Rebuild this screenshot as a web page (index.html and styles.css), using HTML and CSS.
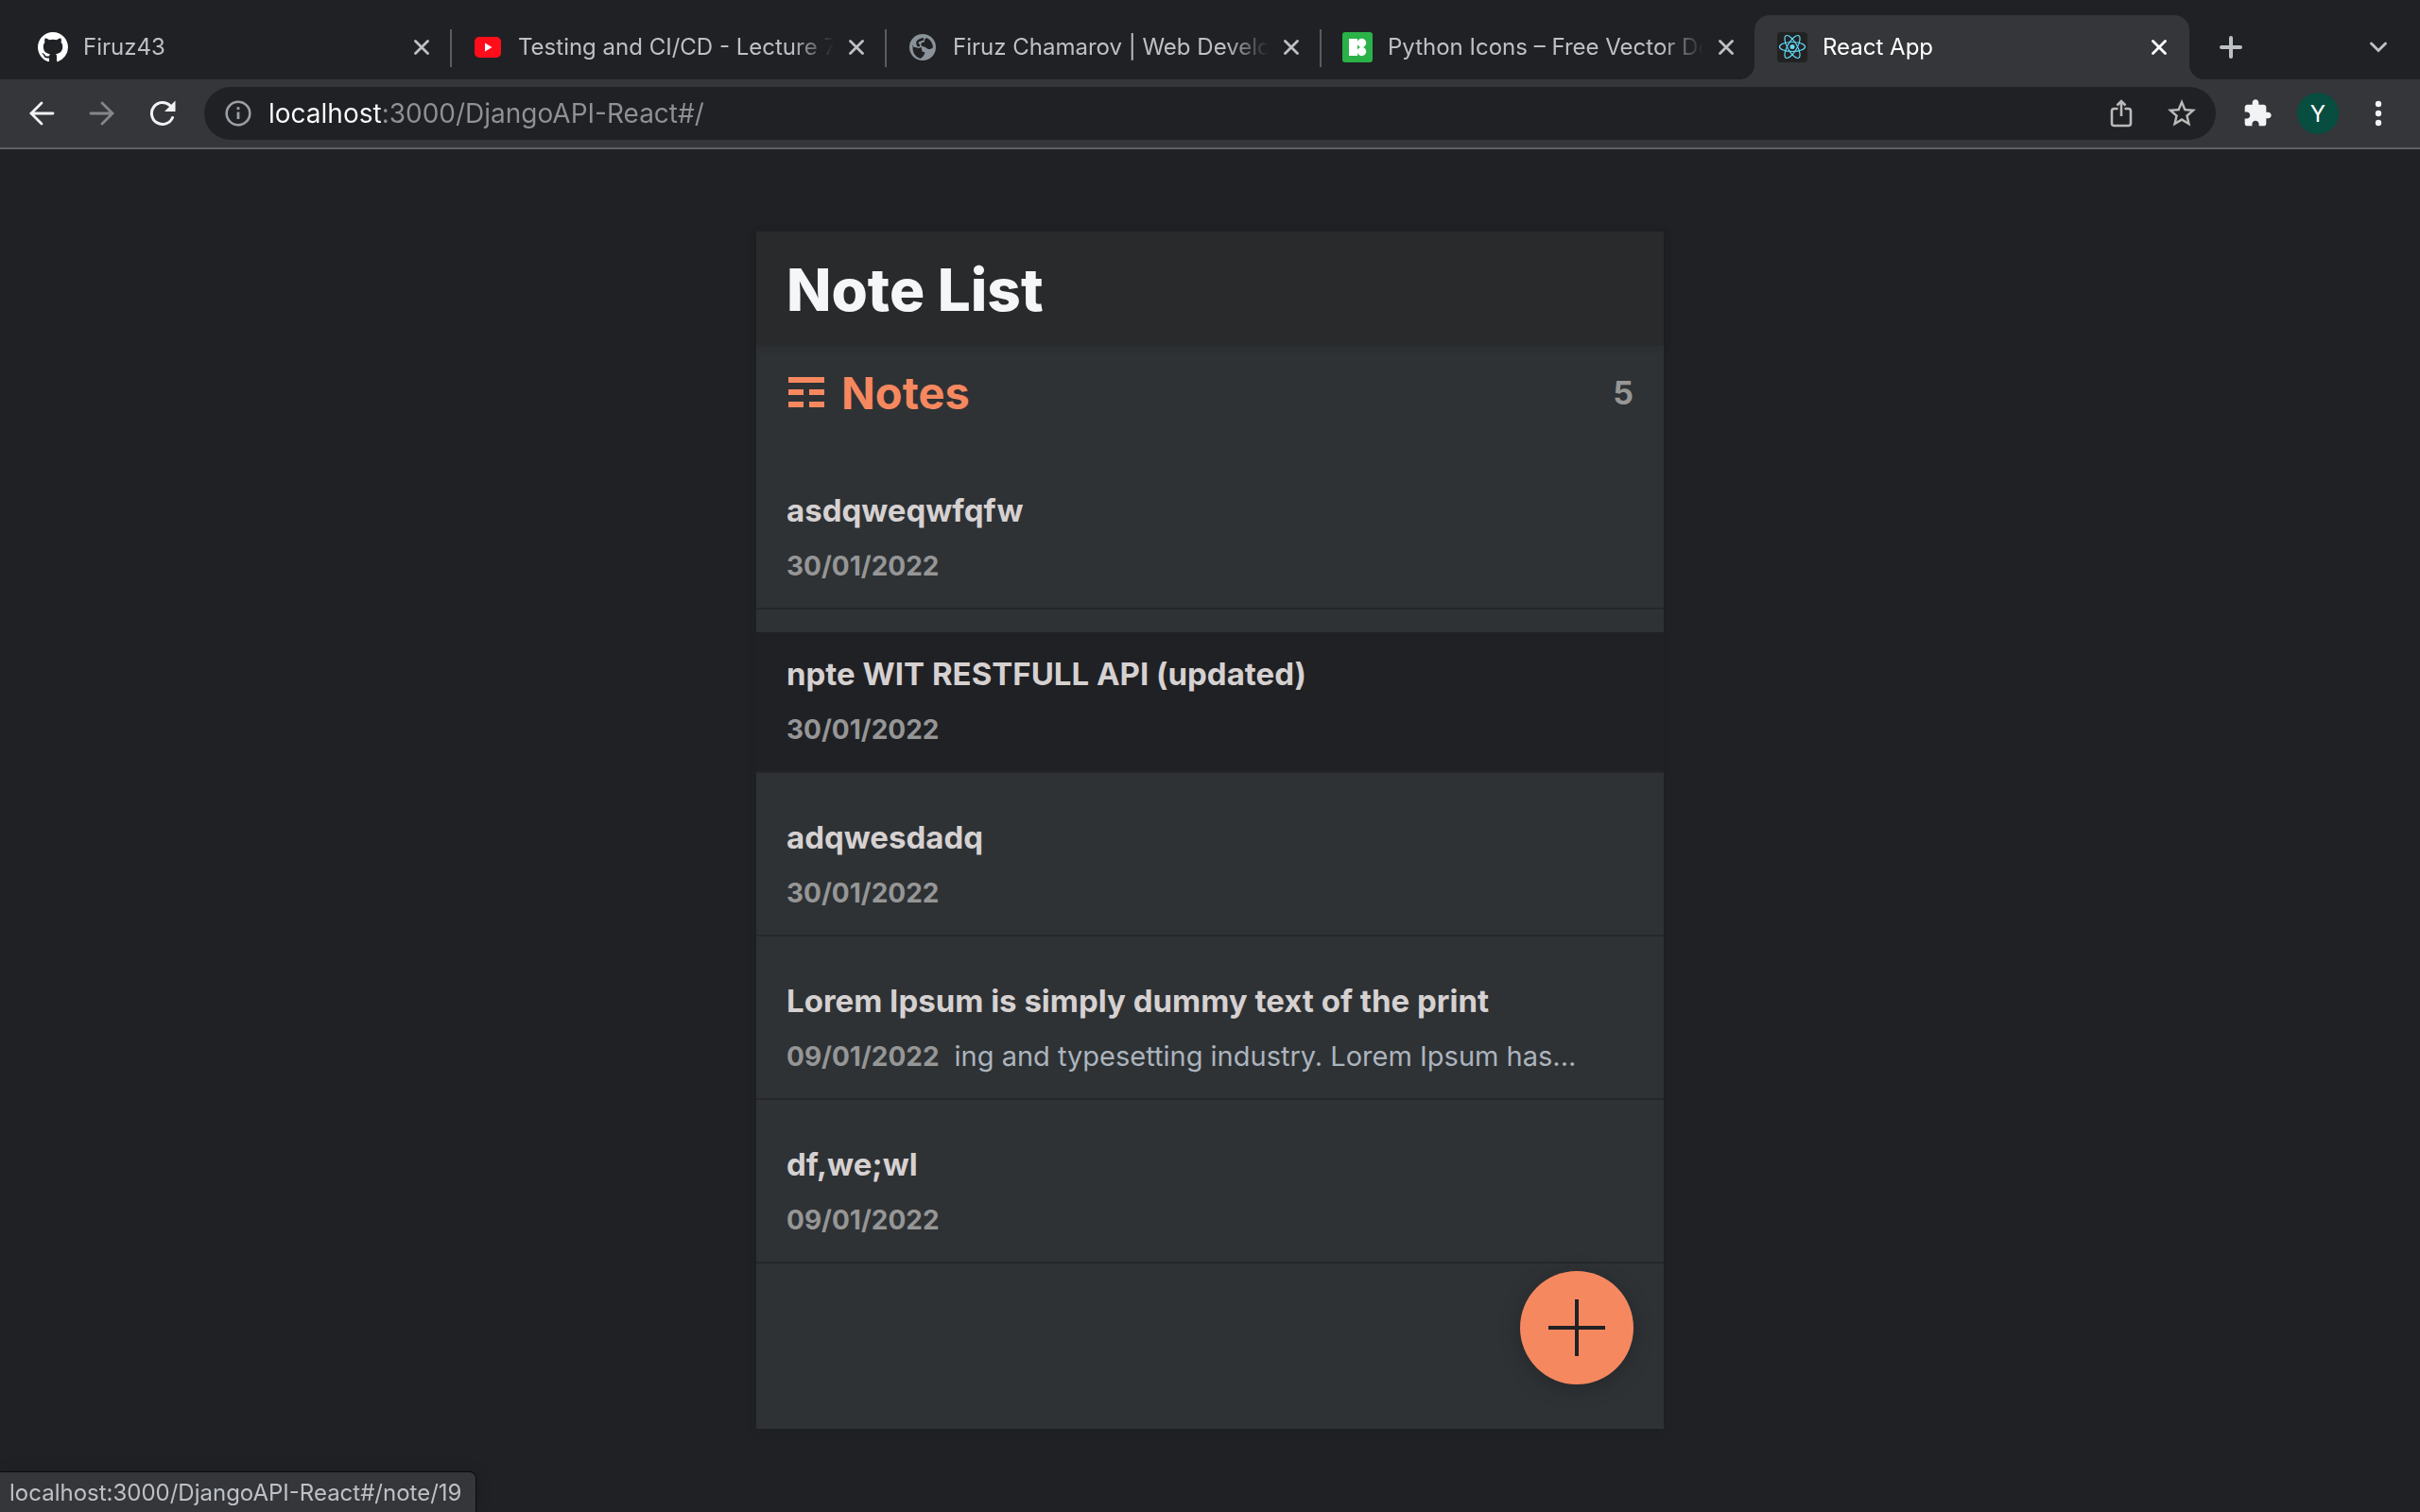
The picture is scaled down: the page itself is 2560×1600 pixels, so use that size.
FILE: index.html
```html
<!DOCTYPE html>
<html lang="en">
<head>
<meta charset="utf-8">
<title>React App</title>
<link rel="stylesheet" href="styles.css">
</head>
<body>
<svg class="sprite" aria-hidden="true">
  <symbol id="close" viewBox="0 0 16 16"><path d="M1.5 1.5l13 13M14.5 1.5l-13 13" fill="none" stroke="currentColor" stroke-width="2.8" stroke-linecap="round"/></symbol>
</svg>

<header class="browser">
  <div class="tabs">
    <div class="tab">
      <svg class="favicon" viewBox="0 0 16 16" aria-hidden="true"><path fill="#fff" d="M8 0C3.58 0 0 3.58 0 8c0 3.54 2.29 6.53 5.47 7.59.4.07.55-.17.55-.38 0-.19-.01-.82-.01-1.49-2.01.37-2.53-.49-2.69-.94-.09-.23-.48-.94-.82-1.13-.28-.15-.68-.52-.01-.53.63-.01 1.08.58 1.23.82.72 1.21 1.87.87 2.33.66.07-.52.28-.87.51-1.07-1.78-.2-3.64-.89-3.64-3.95 0-.87.31-1.59.82-2.15-.08-.2-.36-1.02.08-2.12 0 0 .67-.21 2.2.82.64-.18 1.32-.27 2-.27s1.36.09 2 .27c1.53-1.04 2.2-.82 2.2-.82.44 1.1.16 1.92.08 2.12.51.56.82 1.27.82 2.15 0 3.07-1.87 3.75-3.65 3.95.29.25.54.73.54 1.48 0 1.07-.01 1.93-.01 2.2 0 .21.15.46.55.38A8.01 8.01 0 0 0 16 8c0-4.42-3.58-8-8-8z"/></svg>
      <button class="tab-title" type="button">Firuz43</button>
      <button class="tab-close" type="button" aria-label="Close tab"><svg><use href="#close"/></svg></button>
    </div>
    <div class="tab divided">
      <svg class="favicon" viewBox="0 0 32 32" aria-hidden="true"><rect x="2" y="5" width="28" height="22" rx="5" fill="#ff0d1a"/><path d="M13 11.5l7.500 4.500-7.500 4.500z" fill="#fff"/></svg>
      <button class="tab-title" type="button">Testing and CI/CD - Lecture 7</button>
      <button class="tab-close" type="button" aria-label="Close tab"><svg><use href="#close"/></svg></button>
    </div>
    <div class="tab divided">
      <svg class="favicon" viewBox="0 0 32 32" aria-hidden="true"><circle cx="16" cy="16" r="14" fill="#8a9299"/><path d="M5.500 13.500q4 3 9 2.500l1 4.500 3 1q-1 4-5 6.500Q4.500 25 5.500 13.500zM20 6q6 2.500 7 10-2 3-6 1.500-2-2.500-5.500-2.500-2.500-1.500 0-4 3.500 0 2.500-3z" fill="#202125"/><path d="M6 11q2-5 8-7l4 1-2 3-3 1.500v5l3 .5-4 2q-3-1-6-1.500z" fill="#8a9299"/><path d="M13 14h-2q-2-4 2-5.500l4-1.500" fill="none" stroke="#202125" stroke-width="2.500"/></svg>
      <button class="tab-title" type="button">Firuz Chamarov | Web Develop</button>
      <button class="tab-close" type="button" aria-label="Close tab"><svg><use href="#close"/></svg></button>
    </div>
    <div class="tab divided">
      <svg class="favicon" viewBox="0 0 32 32" aria-hidden="true"><rect width="32" height="32" rx="3" fill="#2ab148"/><path d="M7 7h9v18H7z" fill="#fff"/><circle cx="20.500" cy="11.500" r="4.700" fill="#fff"/><circle cx="20.500" cy="20.500" r="4.700" fill="#fff"/></svg>
      <button class="tab-title" type="button">Python Icons – Free Vector Do</button>
      <button class="tab-close" type="button" aria-label="Close tab"><svg><use href="#close"/></svg></button>
    </div>
    <div class="tab active">
      <svg class="favicon" viewBox="0 0 32 32" aria-hidden="true"><rect width="32" height="32" rx="4" fill="#222"/><g fill="none" stroke="#61dafb" stroke-width="1.200"><ellipse cx="16" cy="15.500" rx="13.500" ry="5"/><ellipse cx="16" cy="15.500" rx="13.500" ry="5" transform="rotate(60 16 15.500)"/><ellipse cx="16" cy="15.500" rx="13.500" ry="5" transform="rotate(120 16 15.500)"/></g><circle cx="16" cy="15.500" r="2.500" fill="#61dafb"/></svg>
      <button class="tab-title" type="button">React App</button>
      <button class="tab-close" type="button" aria-label="Close tab"><svg><use href="#close"/></svg></button>
    </div>
    <button class="icon-button new-tab" type="button" aria-label="New tab"><svg width="24" height="24" viewBox="0 0 24 24"><path d="M12 2v20M2 12h20" fill="none" stroke="currentColor" stroke-width="4" stroke-linecap="round"/></svg></button>
    <button class="icon-button tab-search" type="button" aria-label="Search tabs"><svg width="20" height="14" viewBox="0 0 20 14"><path d="M2.500 3l7.500 7.500L17.500 3" fill="none" stroke="currentColor" stroke-width="3" stroke-linecap="round"/></svg></button>
  </div>

  <div class="toolbar">
    <button class="icon-button" type="button" aria-label="Back"><svg width="28" height="28" viewBox="0 0 28 28"><path d="M26 14H3M14 3L3 14l11 11" fill="none" stroke="currentColor" stroke-width="2.800" stroke-linecap="round"/></svg></button>
    <button class="icon-button muted" type="button" aria-label="Forward"><svg width="28" height="28" viewBox="0 0 28 28"><path d="M2 14h23M14 3l11 11-11 11" fill="none" stroke="currentColor" stroke-width="2.800" stroke-linecap="round"/></svg></button>
    <button class="icon-button" type="button" aria-label="Reload"><svg width="28" height="28" viewBox="0 0 28 28"><path d="M24.500 18.500A11.500 11.500 0 1 1 22 5.800" fill="none" stroke="currentColor" stroke-width="3" stroke-linecap="round"/><path d="M27.500.5V12H16z" fill="currentColor"/></svg></button>
    <div class="omnibox">
      <svg class="info" viewBox="0 0 32 32" aria-hidden="true"><circle cx="16" cy="16" r="12.300" fill="none" stroke="#9aa0a6" stroke-width="2.600"/><path d="M14.600 9.300h2.800V12h-2.800zM14.600 14.500h2.800V22h-2.800z" fill="#9aa0a6"/></svg>
      <input class="address" type="text" aria-label="Address" value="localhost:3000/DjangoAPI-React#/">
      <button class="icon-button dim" type="button" aria-label="Share"><svg width="28" height="30" viewBox="0 0 28 30"><path d="M10.500 10H6.500Q4 10 4 12.500v13Q4 28 6.500 28h15q2.500 0 2.500-2.500v-13Q24 10 21.500 10h-4M14 18V3M9.500 6.500L14 2l4.500 4.500" fill="none" stroke="currentColor" stroke-width="2.600"/></svg></button>
      <button class="icon-button dim" type="button" aria-label="Bookmark"><svg width="36" height="36" viewBox="0 0 24 24"><path fill="currentColor" d="M22 9.240l-7.190-.62L12 2 9.190 8.630 2 9.240l5.460 4.730L5.820 21 12 17.270 18.180 21l-1.630-7.030L22 9.240zM12 15.400l-3.760 2.270 1-4.280-3.320-2.880 4.380-.38L12 6.100l1.710 4.040 4.380.38-3.320 2.880 1 4.280L12 15.400z"/></svg></button>
    </div>
    <button class="icon-button" type="button" aria-label="Extensions"><svg width="32" height="32" viewBox="0 0 24 24"><path fill="currentColor" d="M20.500 11H19V7c0-1.100-.9-2-2-2h-4V3.500C13 2.120 11.880 1 10.500 1S8 2.120 8 3.500V5H4c-1.100 0-1.990.9-1.990 2v3.800H3.500c1.490 0 2.700 1.210 2.700 2.700s-1.210 2.700-2.700 2.700H2V20c0 1.100.9 2 2 2h3.800v-1.500c0-1.490 1.210-2.700 2.700-2.700 1.490 0 2.700 1.210 2.700 2.700V22H17c1.100 0 2-.9 2-2v-4h1.500c1.380 0 2.500-1.120 2.500-2.500S21.880 11 20.500 11z"/></svg></button>
    <button class="icon-button" type="button" aria-label="Profile"><span class="avatar">Y</span></button>
    <button class="icon-button" type="button" aria-label="Menu"><svg width="8" height="28" viewBox="0 0 8 28"><g fill="currentColor"><circle cx="4" cy="4" r="3.200"/><circle cx="4" cy="14" r="3.200"/><circle cx="4" cy="24" r="3.200"/></g></svg></button>
  </div>
</header>

<main class="page">
  <div class="app">
    <header class="app-header"><h1>Note List</h1></header>
    <div class="notes-header">
      <h2 class="notes-title"><svg width="40" height="34" viewBox="0 0 40 34" aria-hidden="true"><path fill="currentColor" d="M2 0h38v6H2zM2 13h16v6H2zM24 13h16v6H24zM2 26h16v6H2zM24 26h16v6H24z"/></svg>Notes</h2>
      <p class="notes-count">5</p>
    </div>
    <nav class="notes-list">
      <a class="note" href="#/note/20"><h3>asdqweqwfqfw</h3><p><time>30/01/2022</time></p></a>
      <a class="note hovered" href="#/note/19"><h3>npte WIT RESTFULL API (updated)</h3><p><time>30/01/2022</time></p></a>
      <a class="note" href="#/note/18"><h3>adqwesdadq</h3><p><time>30/01/2022</time></p></a>
      <a class="note" href="#/note/17"><h3>Lorem Ipsum is simply dummy text of the print</h3><p><time>09/01/2022</time>ing and typesetting industry. Lorem Ipsum has...</p></a>
      <a class="note" href="#/note/16"><h3>df,we;wl</h3><p><time>09/01/2022</time></p></a>
    </nav>
    <button class="add" type="button" aria-label="Add note"><svg width="60" height="60" viewBox="0 0 60 60"><path d="M30 0v60M0 30h60" stroke="currentColor" stroke-width="4"/></svg></button>
  </div>
</main>

<div class="status">localhost:3000/DjangoAPI-React#/note/19</div>
</body>
</html>
```
FILE: styles.css
```css
* {
  box-sizing: border-box;
  margin: 0;
}

body {
  display: flex;
  flex-direction: column;
  min-height: 100vh;
  background: #202125;
  color: #d6d1d1;
  font-family: Inter, "Liberation Sans", sans-serif;
}

button,
input {
  padding: 0;
  border: 0;
  background: none;
  color: inherit;
  font: inherit;
}

svg {
  display: block;
  flex: none;
}

.sprite {
  position: absolute;
  width: 0;
  height: 0;
}

/* Tab strip */
.tabs {
  display: flex;
  height: 84px;
  padding: 16px 12px 0 16px;
  color: #bdc1c6;
}

.tab {
  display: flex;
  flex: 0 1 460px;
  align-items: center;
  min-width: 0;
  padding: 0 18px 0 24px;
  position: relative;
}

.divided::before {
  content: "";
  position: absolute;
  left: 0;
  top: 15px;
  width: 2px;
  height: 40px;
  background: #5a5c61;
}

.favicon {
  width: 32px;
  height: 32px;
  margin-right: 16px;
}

.tab-title {
  flex: 1;
  overflow: hidden;
  font-size: 24px;
  line-height: 36px;
  text-align: left;
  white-space: nowrap;
  mask-image: linear-gradient(to left, transparent, #000 44px);
}

.tab-close {
  display: grid;
  place-items: center;
  width: 24px;
  height: 24px;
  margin-left: 12px;
}

.tab-close svg {
  width: 16px;
  height: 16px;
}

.active {
  padding-right: 20px;
  border-radius: 16px 16px 0 0;
  background: #35363a;
  color: #fff;
}

.active::before,
.active::after {
  content: "";
  position: absolute;
  bottom: 0;
  width: 16px;
  height: 16px;
}

.active::before {
  right: 100%;
  background: radial-gradient(circle at 0 0, transparent 16px, #35363a 16px);
}

.active::after {
  left: 100%;
  background: radial-gradient(circle at 100% 0, transparent 16px, #35363a 16px);
}

.icon-button {
  display: grid;
  flex: none;
  place-items: center;
  width: 64px;
}

.new-tab {
  margin-left: 12px;
}

.tab-search {
  margin-left: auto;
}

/* Toolbar */
.toolbar {
  display: flex;
  align-items: center;
  height: 74px;
  padding: 0 12px;
  border-bottom: 2px solid #5f6065;
  background: #35363a;
  color: #f1f3f4;
}

.muted {
  color: #86878a;
}

.omnibox {
  display: flex;
  flex: 1;
  align-items: center;
  height: 56px;
  margin: 0 12px;
  padding: 0 4px 0 20px;
  border-radius: 28px;
  background: #202125;
}

.info {
  width: 32px;
  height: 32px;
  margin-right: 16px;
}

.address {
  flex: 1;
  min-width: 0;
  background: linear-gradient(90deg, #fff 121px, #8f9194 121px);
  background-clip: text;
  color: transparent;
  font-size: 28px;
  line-height: 40px;
}

.dim {
  color: #bababa;
}

.avatar {
  display: grid;
  place-items: center;
  width: 44px;
  height: 44px;
  border-radius: 50%;
  background: #074d40;
  color: #fff;
  font-size: 24px;
}

/* Notes app */
.page {
  display: flex;
  flex: 1;
  flex-direction: column;
  padding: 87px 32px 88px;
}

.app {
  position: relative;
  flex: 1;
  width: 100%;
  max-width: 960px;
  margin: 0 auto;
  background: #2e3235;
  box-shadow: 0 2px 12px rgba(0, 0, 0, .08);
}

.app-header {
  padding: 26px 32px 23px;
  background: #292a2c;
  box-shadow: 0 2px 8px rgba(0, 0, 0, .12);
}

h1 {
  color: #f5f6f8;
  font-size: 62px;
  font-weight: 800;
  line-height: 72px;
}

.notes-header {
  display: flex;
  align-items: center;
  justify-content: space-between;
  padding: 20px 32px 26px;
}

.notes-title {
  display: flex;
  gap: 18px;
  align-items: center;
  color: #f68860;
  font-size: 47px;
  font-weight: 700;
  line-height: 60px;
}

.notes-count {
  color: #969696;
  font-size: 34px;
  font-weight: 700;
  line-height: 60px;
}

.note {
  display: block;
  margin-top: 24px;
  padding: 22px 32px 26px;
  border-bottom: 2px solid #252729;
  color: inherit;
  text-decoration: none;
}

.note:first-child {
  margin-top: 0;
  padding-top: 46px;
}

.hovered {
  background: #202125;
}

.note h3 {
  margin-bottom: 19px;
  font-size: 33px;
  font-weight: 700;
  line-height: 44px;
}

.note p {
  color: #acb4bd;
  font-size: 29px;
  line-height: 36px;
}

.note time {
  margin-right: 16px;
  color: #969696;
  font-size: 28px;
  font-weight: 700;
}

.add {
  position: absolute;
  right: 32px;
  bottom: 47px;
  display: grid;
  place-items: center;
  width: 120px;
  height: 120px;
  border-radius: 50%;
  background: #f68860;
  box-shadow: 0 4px 24px rgba(0, 0, 0, .2);
  color: #202125;
}

.status {
  position: fixed;
  bottom: 0;
  left: 0;
  padding: 4px 14px 2px 10px;
  border-radius: 0 6px 0 0;
  background: #35363a;
  box-shadow: 0 0 0 1px #0c0c0e, 0 0 16px rgba(0, 0, 0, .2);
  color: #bdc1c6;
  font-size: 24px;
  line-height: 36px;
}
```
